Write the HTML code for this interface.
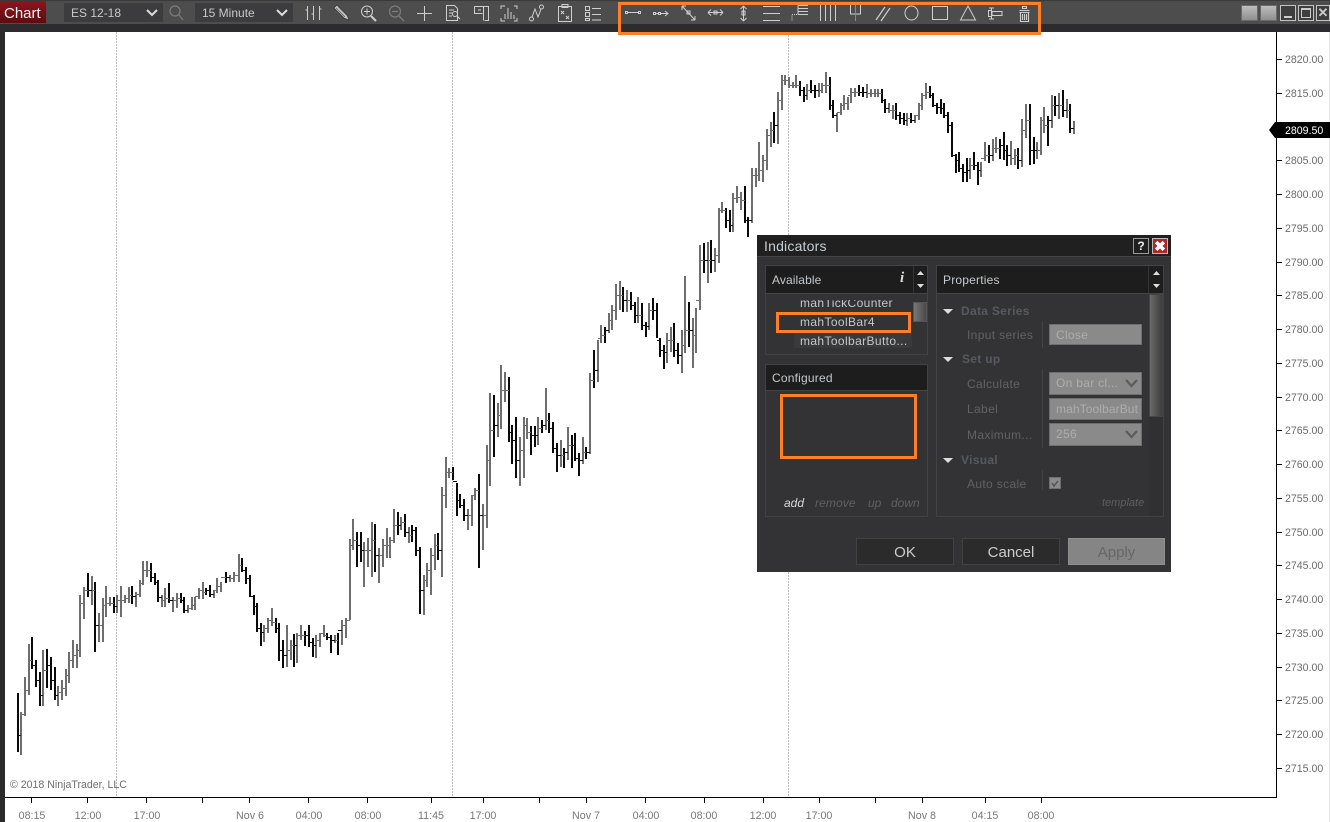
<!DOCTYPE html>
<html><head><meta charset="utf-8"><title>Chart</title>
<style>
html,body{margin:0;padding:0;background:#fff;width:1330px;height:822px;overflow:hidden}
body{position:relative;font-family:"Liberation Sans",Arial,sans-serif}
.a{position:absolute;white-space:nowrap}
.box{position:absolute;box-sizing:border-box}
.lab{position:absolute;white-space:nowrap;font-size:12px;color:#626262;letter-spacing:.35px;line-height:14px}
.sec{position:absolute;white-space:nowrap;font-size:12px;font-weight:bold;color:#565a60;letter-spacing:.3px;line-height:14px}
.inp{position:absolute;box-sizing:border-box;left:1049px;width:93px;background:#8a8a8a;border:1px solid #6e6e6e;color:#adadad;font-size:12px;letter-spacing:.3px;padding-left:6px;overflow:hidden;white-space:nowrap}
.tri{position:absolute;left:943px;width:0;height:0;border-left:5px solid transparent;border-right:5px solid transparent;border-top:5px solid #ddd}
.btn{position:absolute;box-sizing:border-box;top:538px;height:27px;background:#2b2b2b;border:1px solid #424242;color:#ccc;font-size:15px;line-height:27px;text-align:center}
.wb{position:absolute;box-sizing:border-box;top:5px;height:16px}
</style></head>
<body>
<svg class="a" style="left:0;top:0" width="1330" height="822" viewBox="0 0 1330 822">
<rect width="1330" height="822" fill="#fff"/>
<rect x="0" y="0" width="5" height="822" fill="#2b2b2b"/>
<rect x="1329" y="32" width="1" height="790" fill="#e2e2e2"/>
<g stroke="#bdbdbd" stroke-width="1" stroke-dasharray="2 1" shape-rendering="crispEdges">
<path d="M116.5 32V797M452.5 32V797M788.5 32V797"/>
</g>
<g fill="none" stroke-width="2" shape-rendering="crispEdges">
<path stroke="#6e6e6e" d="M21 712V755M25 677V716M29 644V695M43 650V706M58 686V706M62 680V700M66 669V696M69 652V683M73 640V668M77 644V668M80 595V657M84 587V619M92 576V605M99 613V642M103 598V642M106 586V617M110 597V606M117 595V613M121 586V617M125 595V603M129 587V603M136 592V607M140 580V597M143 561V585M147 561V577M162 595V607M165 588V607M173 597V612M177 593V608M188 605V613M192 597V610M195 597V610M199 588V599M203 582V599M214 590V598M217 578V593M221 582V592M230 575V582M234 572V582M239 554V582M264 625V642M268 618V633M272 608V626M287 625V667M291 640V660M297 633V663M301 625V640M316 635V658M320 633V647M324 625V637M335 635V643M342 620V645M346 618V638M350 539V620M353 519V550M364 542V587M368 538V567M372 522V577M379 548V583M383 539V567M387 528V558M390 537V558M394 509V543M401 517V530M409 527V543M424 575V615M427 563V587M431 548V595M435 534V570M442 487V577M446 457V508M449 468V478M468 509V530M472 495V526M475 488V500M483 504V550M487 445V528M490 393V486M498 403V437M501 365V429M505 372V402M520 437V486M524 417V478M527 418V439M538 417V445M546 388V430M561 440V467M568 427V460M583 437V464M590 373V454M598 340V382M601 325V343M609 313V333M612 305V330M616 284V320M620 281V310M627 290V312M638 297V323M649 303V330M667 333V363M671 327V352M682 330V373M685 276V353M693 318V368M696 308V353M700 245V310M708 242V283M715 248V272M719 208V263M722 202V213M733 193V232M737 186V203M741 192V210M752 168V223M756 168V187M759 142V181M763 155V182M767 129V170M771 122V147M778 92V144M782 75V110M785 75V85M789 77V88M793 82V88M796 75V88M807 84V100M819 83V97M822 83V93M826 72V93M837 113V132M841 103V115M844 95V110M848 97V110M851 88V103M855 88V97M867 84V98M871 89V97M875 89V97M878 89V97M889 103V113M893 105V119M907 113V126M915 115V123M919 103V120M922 93V110M926 83V99M970 158V179M981 162V177M985 142V161M993 139V161M996 137V153M1011 141V165M1015 149V165M1022 119V167M1026 104V138M1037 142V159M1041 117V155M1044 107V133M1052 95V128M1059 93V119M1067 99V118M1074 121V134"/>
<path stroke="#0a0a0a" d="M18 693V752M32 637V669M36 660V687M40 672V706M47 649V688M51 657V690M55 667V700M88 573V597M95 582V652M114 597V613M132 586V604M151 563V582M155 573V585M158 580V602M169 583V603M181 593V603M184 597V613M206 588V595M210 585V597M226 572V583M242 558V572M246 567V584M250 575V597M254 595V615M257 603V632M261 623V646M276 618V633M279 623V661M283 640V668M294 634V667M305 631V646M309 625V647M313 638V657M327 633V640M331 635V653M338 633V655M357 532V567M361 532V562M375 524V572M398 512V535M405 514V537M412 525V542M416 527V556M420 547V614M438 533V560M453 467V480M457 483V516M460 494V508M464 499V521M479 474V568M494 395V457M509 377V442M512 425V464M516 417V478M531 426V455M535 426V447M542 420V433M549 413V433M553 422V453M557 443V472M564 448V468M572 435V468M575 433V461M579 453V476M586 447V459M594 350V388M605 327V343M623 287V312M631 292V310M635 302V323M642 303V330M646 322V337M653 298V320M657 303V338M660 338V357M664 345V369M674 323V357M678 343V364M689 302V347M704 243V273M711 240V273M726 208V228M730 210V232M745 186V223M748 217V237M774 112V143M800 81V96M804 87V102M811 80V93M815 85V98M830 77V110M833 100V118M859 85V96M863 87V97M882 89V103M885 99V113M896 103V120M900 112V124M904 113V125M911 113V123M930 86V98M933 93V107M937 103V114M941 99V114M944 103V118M948 112V133M952 122V157M956 154V173M959 152V172M963 164V182M967 158V182M974 152V170M978 162V185M989 145V163M1000 139V159M1004 132V160M1007 145V166M1018 148V169M1030 104V165M1034 137V164M1048 116V146M1055 96V116M1063 90V117M1070 104V133"/>
</g>
<g fill="none" stroke-width="1" shape-rendering="crispEdges" transform="translate(0 .5)">
<path stroke="#6e6e6e" d="M21 714h4M25 690h4M29 660h3M43 670h4M58 692h4M62 688h4M66 675h3M69 660h4M73 655h4M77 650h3M80 603h4M84 590h4M92 590h3M99 625h4M103 605h3M106 603h4M110 603h4M117 600h4M121 600h4M125 598h4M129 595h3M136 594h4M140 583h3M143 570h4M147 570h4M162 600h3M165 598h4M173 600h4M177 598h4M188 608h4M192 605h3M195 596h4M199 590h4M203 592h3M214 590h3M217 586h4M221 577h5M230 578h4M234 575h5M239 565h3M264 628h4M268 620h4M272 622h4M287 650h4M291 645h3M297 635h4M301 635h4M316 640h4M320 633h4M324 635h3M335 640h3M342 625h4M346 620h4M350 545h3M353 540h4M364 550h4M368 550h4M372 540h3M379 555h4M383 545h4M387 545h3M390 540h4M394 525h4M401 522h4M409 535h3M424 580h3M427 570h4M431 555h4M435 545h3M442 495h4M446 472h3M449 472h4M468 515h4M472 495h3M475 490h4M483 515h4M487 460h3M490 430h4M498 415h3M501 390h4M505 390h4M520 450h4M524 425h3M527 432h4M538 428h4M546 420h3M561 455h3M568 445h4M583 452h3M590 380h4M598 338h3M601 335h4M609 320h3M612 310h4M616 295h4M620 295h3M627 300h4M638 315h4M649 310h4M667 340h4M671 340h3M682 345h3M685 330h4M693 335h3M696 300h4M700 260h4M708 260h3M715 255h4M719 210h3M722 210h4M733 198h4M737 197h4M741 200h4M752 175h4M756 175h3M759 170h4M763 160h4M767 135h4M771 130h3M778 100h4M782 80h3M785 80h4M789 85h4M793 85h3M796 85h4M807 90h4M819 90h3M822 85h4M826 85h4M837 112h4M841 105h3M844 103h4M848 95h3M851 92h4M855 92h4M867 93h4M871 93h4M875 93h3M878 93h4M889 110h4M893 110h3M907 118h4M915 115h4M919 105h3M922 95h4M926 92h4M970 165h4M981 158h4M985 155h4M993 148h3M996 148h4M1011 158h4M1015 155h3M1022 130h4M1026 120h4M1037 150h4M1041 120h3M1044 125h4M1052 105h3M1059 105h4M1067 110h3"/>
<path stroke="#0a0a0a" d="M18 735h3M32 665h4M36 680h4M40 695h3M47 665h4M51 680h4M55 695h3M88 590h4M95 625h4M114 606h3M132 596h4M151 577h4M155 582h3M158 597h4M169 600h4M181 600h3M184 610h4M206 590h4M210 594h4M226 577h4M242 570h4M246 578h4M250 596h4M254 606h3M257 628h4M261 632h3M276 628h3M279 650h4M283 655h4M294 645h3M305 635h4M309 642h4M313 645h3M327 637h4M331 640h4M338 630h4M357 545h4M361 550h3M375 555h4M398 525h3M405 532h4M412 530h4M416 550h4M420 590h4M438 550h4M453 481h4M457 500h3M460 505h4M464 515h4M479 515h4M494 425h4M509 432h3M512 440h4M516 460h4M531 435h4M535 435h3M542 425h4M549 428h4M553 448h4M557 455h4M564 452h4M572 445h3M575 458h4M579 460h4M586 452h4M594 370h4M605 330h4M623 300h4M631 305h4M635 315h3M642 325h4M646 326h3M653 310h4M657 340h3M660 350h4M664 352h3M674 350h4M678 355h4M689 330h4M704 260h4M711 260h4M726 220h4M730 225h3M745 220h3M748 220h4M774 125h4M800 90h4M804 95h3M811 90h4M815 90h4M830 105h3M833 115h4M859 92h4M863 92h4M882 100h3M885 108h4M896 115h4M900 118h4M904 120h3M911 120h4M930 95h3M933 105h4M937 107h4M941 108h3M944 115h4M948 125h4M952 155h4M956 160h3M959 168h4M963 172h4M967 170h3M974 165h4M978 170h3M989 155h4M1000 145h4M1004 150h3M1007 155h4M1018 160h4M1030 150h4M1034 150h3M1048 120h4M1055 105h4M1063 110h4M1070 128h4"/>
</g>
<path d="M5 797.500H1277M1276.500 32V798" stroke="#000" stroke-width="1.400" fill="none" shape-rendering="crispEdges"/>
<g stroke="#000" stroke-width="1" shape-rendering="crispEdges">
<path d="M1277 59.500h5M1277 93.500h5M1277 160.500h5M1277 194.500h5M1277 228.500h5M1277 262.500h5M1277 295.500h5M1277 329.500h5M1277 363.500h5M1277 397.500h5M1277 430.500h5M1277 464.500h5M1277 498.500h5M1277 532.500h5M1277 565.500h5M1277 599.500h5M1277 633.500h5M1277 667.500h5M1277 700.500h5M1277 734.500h5M1277 768.500h5"/>
<path d="M31.500 798v5M87.500 798v5M146.500 798v5M202.500 798v5M249.500 798v5M308.500 798v5M367.500 798v5M431.500 798v5M483.500 798v5M539.500 798v5M586.500 798v5M645.500 798v5M704.500 798v5M763.500 798v5M819.500 798v5M875.500 798v5M922.500 798v5M985.500 798v5M1041.500 798v5"/>
</g>
<g font-family="Liberation Sans,Arial,sans-serif" font-size="10.600" fill="#6b6b6b">
<text x="1285" y="63">2820.00</text><text x="1285" y="97">2815.00</text><text x="1285" y="164">2805.00</text><text x="1285" y="198">2800.00</text><text x="1285" y="232">2795.00</text><text x="1285" y="266">2790.00</text><text x="1285" y="299">2785.00</text><text x="1285" y="333">2780.00</text><text x="1285" y="367">2775.00</text><text x="1285" y="401">2770.00</text><text x="1285" y="434">2765.00</text><text x="1285" y="468">2760.00</text><text x="1285" y="502">2755.00</text><text x="1285" y="536">2750.00</text><text x="1285" y="569">2745.00</text><text x="1285" y="603">2740.00</text><text x="1285" y="637">2735.00</text><text x="1285" y="671">2730.00</text><text x="1285" y="704">2725.00</text><text x="1285" y="738">2720.00</text><text x="1285" y="772">2715.00</text>
</g>
<path d="M1269 130L1275 122H1330V138H1275Z" fill="#000"/>
<text x="1285" y="134" font-family="Liberation Sans,Arial,sans-serif" font-size="10.600" fill="#fff">2809.50</text>
<g font-family="Liberation Sans,Arial,sans-serif" font-size="10.700" fill="#777" text-anchor="middle">
<text x="32" y="819">08:15</text><text x="88" y="819">12:00</text><text x="147" y="819">17:00</text><text x="250" y="819">Nov 6</text><text x="309" y="819">04:00</text><text x="368" y="819">08:00</text><text x="431" y="819">11:45</text><text x="483" y="819">17:00</text><text x="586" y="819">Nov 7</text><text x="646" y="819">04:00</text><text x="704" y="819">08:00</text><text x="763" y="819">12:00</text><text x="819" y="819">17:00</text><text x="922" y="819">Nov 8</text><text x="985" y="819">04:15</text><text x="1041" y="819">08:00</text>
</g>
<text x="10" y="788" font-family="Liberation Sans,Arial,sans-serif" font-size="10.600" fill="#6e6e6e">© 2018 NinjaTrader, LLC</text>
<!-- toolbar -->
<rect x="0" y="0" width="1330" height="24" fill="#4d4d4d"/>
<rect x="0" y="0" width="1330" height="1" fill="#3a3a3a"/>
<rect x="0" y="24" width="1330" height="8" fill="#2c2c2e"/>
<defs><linearGradient id="r" x1="0" y1="0" x2="0" y2="1"><stop offset="0" stop-color="#8f151c"/><stop offset="1" stop-color="#5d0c10"/></linearGradient></defs>
<rect x="0" y="1" width="46" height="22" fill="url(#r)"/>
<text x="4" y="18" font-family="Liberation Sans,Arial,sans-serif" font-size="15" fill="#f2f2f2">Chart</text>
<rect x="64" y="3" width="99" height="19" fill="#3c3c3f"/>
<text x="71" y="17" font-family="Liberation Sans,Arial,sans-serif" font-size="12" fill="#c8c8c8">ES 12-18</text>
<path d="M147 10l5 5 5-5" fill="none" stroke="#ddd" stroke-width="2"/>
<rect x="195" y="3" width="98" height="19" fill="#3c3c3f"/>
<text x="202" y="17" font-family="Liberation Sans,Arial,sans-serif" font-size="12" fill="#c8c8c8">15 Minute</text>
<path d="M277 10l5 5 5-5" fill="none" stroke="#ddd" stroke-width="2"/>
<g fill="none" stroke="#7c7c7c" stroke-width="1.200"><circle cx="175" cy="11" r="5"/><path d="M179 15l4 5"/><circle cx="395" cy="11.500" r="5.500"/><path d="M392 11.500h6M399 16l5 5" stroke-width="1.300"/></g>
<path d="M334 8l3-3 10 10 2 5-5-2z" fill="#c4c4c4" stroke="#2e2e2e" stroke-width=".6"/>
<path d="M336 8l9 9M338 6.500l9 9" stroke="#555" stroke-width=".7" fill="none"/>
<g fill="none" stroke="#cfcfcf" stroke-width="1">
<path d="M307.500 6V20M313.500 6V20M319.500 6V20M305.500 10h2M311.500 14h2M319.500 9h2"/>
<circle cx="367" cy="11.500" r="5.500"/><path d="M364 11.500h6M367 8.500v6"/><path d="M371 16l5 5" stroke-width="2"/>
<path d="M417 13.500h15M424.500 6v15"/>
<path d="M446.500 5.500h8l3 3v12h-11zM449 10h5M449 13h3M449 16h3"/><circle cx="455" cy="14" r="2.500"/><path d="M457 16l3 3"/>
<path d="M474.500 6.500h14v14h-4M474.500 6.500v7h8M478 10h3M483.500 6.500v14"/>
<path d="M501 9V6h4M514 6h3v3M501 18v3h4M514 21h3v-3M505 19v-5M508 19V8M511 19v-7M514 19v-4"/>
<circle cx="531.500" cy="19" r="2"/><circle cx="541.500" cy="7" r="2"/><path d="M532 17l3-8 3 8 3-8"/>
<path d="M558.500 6.500h13v15h-13zM562 4.500h6v3h-6zM561 11l3 3M564 11l-3 3M566 16l3 3M569 16l-3 3"/>
<path d="M585.500 6.500h4v4h-4zM585.500 12.500h4v4h-4zM585.500 18.500h4v2h-4zM592 8.500h9M592 14.500h9M592 20h9"/>
<!-- drawing tools -->
<path d="M625.500 11.500h2v2h-2zM638.500 11.500h2v2h-2zM628 12.500h10"/>
<path d="M653.500 12.500h2v2h-2zM658.500 12.500h2v2h-2zM661 13.500h7M665 11l3 2.500-3 2.500M656 13.500h2"/>
<path d="M682 6l13 14M682 6v4M682 6h4M695 20v-4M695 20h-4"/><path d="M687 11h3v3h-3z"/>
<path d="M708 12.500h15M708 12.500l3-3M708 12.500l3 3M723 12.500l-3-3M723 12.500l-3 3M714 11h3v3h-3z"/>
<path d="M743.500 6v15M743.500 6l-3 3M743.500 6l3 3M743.500 21l-3-3M743.500 21l3-3M742 11h3v4h-3z"/>
<path d="M763 6.500h17M763 13.500h17M763 20.500h17"/>
<path d="M798 5.500h10M798 8.500h10M798 11.500h10M798 14.500h10M798 5.500v9"/><path d="M797 14.500h-5v7" stroke-dasharray="1 1"/>
<path d="M820.500 5v16M825.500 5v16M830.500 5v16M835.500 5v16"/>
<path d="M850.500 5v9h10V5"/><path d="M855.500 5v16" stroke="#8a8a8a"/>
<path d="M876 20l9-13M881 21l9-13" stroke-width="1.200"/>
<ellipse cx="911.500" cy="13" rx="6.500" ry="7"/>
<rect x="932.500" y="6.500" width="15" height="13"/>
<path d="M968 6l7.500 14h-15z"/>
<path d="M988.500 10.500h3v6h-3zM992 11.500h10v4h-10zM991.500 8v11M989 8h5M989 19h5"/>
<path d="M1019.500 10.500h10M1019.500 12.500h10M1020.500 12.500v9h8v-9M1022.500 14v6M1024.500 14v6M1026.500 14v6M1022.500 8.500h4v-2h-4z" stroke-width="1.100"/>
</g>
<!-- orange highlight -->
<rect x="619.500" y="3.500" width="420" height="30" fill="none" stroke="#ff7f27" stroke-width="3"/>
</svg>

<!-- window buttons -->
<div class="wb" style="left:1241px;width:17px;background:linear-gradient(#bdbdbd,#8f8f8f);border:1px solid #6a6a6a"></div>
<div class="wb" style="left:1260px;width:17px;background:linear-gradient(#bdbdbd,#8f8f8f);border:1px solid #6a6a6a"></div>
<div class="wb" style="left:1280px;width:16px;background:#3e3e3e;border:1px solid #c4c4c4"><div class="box" style="left:3px;top:10px;width:8px;height:2px;background:#ccc"></div></div>
<div class="wb" style="left:1298px;width:16px;background:#3e3e3e;border:1px solid #c4c4c4"><div class="box" style="left:2px;top:2px;width:10px;height:10px;border:1px solid #ccc;border-top-width:2px"></div></div>
<div class="wb" style="left:1316px;width:14px;background:#3e3e3e;border:1px solid #c4c4c4;color:#ccc;font:bold 13px/14px 'Liberation Sans',sans-serif;text-align:center">✕</div>

<!-- dialog -->
<div class="box" style="left:757px;top:235px;width:414px;height:337px;background:#333335"></div>
<div class="box" style="left:757px;top:235px;width:414px;height:22px;background:#202020;border-bottom:1px solid #444"></div>
<div class="a" style="left:764px;top:237px;font-size:14px;line-height:18px;color:#c8ced2;letter-spacing:.2px">Indicators</div>
<div class="box" style="left:1133px;top:238px;width:16px;height:16px;background:#1f1f1f;border:1px solid #999;color:#eee;font:bold 12px/14px 'Liberation Sans',sans-serif;text-align:center">?</div>
<div class="box" style="left:1152px;top:238px;width:16px;height:16px;background:#a92a2a;border:1px solid #bbb;color:#fff;font:bold 14px/14px 'Liberation Sans',sans-serif;text-align:center">✖</div>

<!-- available -->
<div class="box" style="left:765px;top:265px;width:163px;height:90px;border:1px solid #424244"></div>
<div class="box" style="left:766px;top:266px;width:147px;height:27px;background:#1d1d1d"></div>
<div class="box" style="left:914px;top:266px;width:13px;height:27px;background:#1d1d1d"></div>
<div class="box" style="left:766px;top:293px;width:161px;height:1px;background:#444"></div>
<div class="a" style="left:772px;top:273px;font-size:12px;line-height:15px;color:#c4c8cc;letter-spacing:.1px">Available</div>
<div class="a" style="left:900px;top:269px;font:italic bold 15px/18px 'Liberation Serif',serif;color:#ddd">i</div>
<svg class="a" style="left:914px;top:268px" width="13" height="24"><path d="M3 7l3.500-4 3.500 4z" fill="#ddd"/><path d="M3 16h7l-3.500 4z" fill="#ddd"/></svg>
<div class="box" style="left:794px;top:333px;width:118px;height:15px;background:#3a3a3c"></div>
<div class="box" style="left:766px;top:300px;width:147px;height:12px;overflow:hidden"><div class="a" style="left:34px;top:-4px;font-size:12px;line-height:14px;color:#c4c8cc;letter-spacing:.38px">mahTickCounter</div></div>
<div class="a" style="left:800px;top:315px;font-size:12px;line-height:14px;color:#c4c8cc;letter-spacing:.38px">mahToolBar4</div>
<div class="a" style="left:800px;top:334px;font-size:12px;line-height:14px;color:#c4c8cc;letter-spacing:.38px">mahToolbarButto...</div>
<div class="box" style="left:913px;top:302px;width:14px;height:20px;background:linear-gradient(90deg,#777,#4a4a4a);border:1px solid #555"></div>
<div class="box" style="left:776px;top:312px;width:135px;height:21px;border:3px solid #ff7f27"></div>

<!-- configured -->
<div class="box" style="left:765px;top:364px;width:163px;height:153px;border:1px solid #424244"></div>
<div class="box" style="left:766px;top:365px;width:161px;height:26px;background:#1d1d1d;border-bottom:1px solid #444"></div>
<div class="a" style="left:772px;top:371px;font-size:12px;line-height:15px;color:#c4c8cc;letter-spacing:.2px">Configured</div>
<div class="box" style="left:780px;top:394px;width:137px;height:65px;border:3px solid #ff7f27"></div>
<div class="a" style="left:784px;top:496px;font:italic 12px/14px 'Liberation Sans',sans-serif;color:#d8d8d8">add</div>
<div class="a" style="left:815px;top:496px;font:italic 12px/14px 'Liberation Sans',sans-serif;color:#606060;letter-spacing:.1px">remove</div>
<div class="a" style="left:868px;top:496px;font:italic 12px/14px 'Liberation Sans',sans-serif;color:#606060">up</div>
<div class="a" style="left:891px;top:496px;font:italic 12px/14px 'Liberation Sans',sans-serif;color:#606060">down</div>

<!-- properties -->
<div class="box" style="left:936px;top:265px;width:228px;height:252px;border:1px solid #424244"></div>
<div class="box" style="left:937px;top:266px;width:211px;height:27px;background:#1d1d1d"></div>
<div class="box" style="left:1149px;top:266px;width:14px;height:27px;background:#1d1d1d"></div>
<div class="box" style="left:937px;top:293px;width:226px;height:1px;background:#444"></div>
<div class="a" style="left:943px;top:273px;font-size:12px;line-height:15px;color:#c4c8cc;letter-spacing:.2px">Properties</div>
<svg class="a" style="left:1150px;top:268px" width="13" height="24"><path d="M3 7l3.500-4 3.500 4z" fill="#ddd"/><path d="M3 16h7l-3.500 4z" fill="#ddd"/></svg>
<div class="box" style="left:1149px;top:294px;width:14px;height:222px;background:#303032"></div>
<div class="box" style="left:1149px;top:294px;width:14px;height:123px;background:linear-gradient(90deg,#6a6a6a,#3e3e3e);border:1px solid #444"></div>
<div class="tri" style="top:309px"></div>
<div class="tri" style="top:357px"></div>
<div class="tri" style="top:458px"></div>
<div class="sec" style="left:961px;top:304px">Data Series</div>
<div class="sec" style="left:962px;top:352px">Set up</div>
<div class="sec" style="left:961px;top:453px">Visual</div>
<div class="lab" style="left:967px;top:328px">Input series</div>
<div class="lab" style="left:967px;top:377px">Calculate</div>
<div class="lab" style="left:967px;top:402px">Label</div>
<div class="lab" style="left:967px;top:428px">Maximum...</div>
<div class="lab" style="left:967px;top:477px">Auto scale</div>
<div class="box" style="left:1042px;top:321px;width:1px;height:27px;background:#444"></div>
<div class="box" style="left:1042px;top:369px;width:1px;height:79px;background:#444"></div>
<div class="box" style="left:1042px;top:470px;width:1px;height:20px;background:#444"></div>
<div class="inp" style="top:324px;height:21px;line-height:21px">Close</div>
<div class="inp" style="top:372px;height:23px;line-height:21px">On bar cl...</div>
<div class="inp" style="top:398px;height:22px;line-height:20px;letter-spacing:.1px">mahToolbarBut</div>
<div class="inp" style="top:423px;height:23px;line-height:21px">256</div>
<svg class="a" style="left:1125px;top:378px" width="14" height="12"><path d="M1 2l5.500 6L12 2" fill="none" stroke="#5c5c5c" stroke-width="2.200"/></svg>
<svg class="a" style="left:1125px;top:429px" width="14" height="12"><path d="M1 2l5.500 6L12 2" fill="none" stroke="#5c5c5c" stroke-width="2.200"/></svg>
<div class="box" style="left:1049px;top:477px;width:12px;height:12px;background:#8a8a8a;border:1px solid #6e6e6e"></div>
<svg class="a" style="left:1049px;top:477px" width="12" height="12"><path d="M3 6l2 3 4-5" fill="none" stroke="#555" stroke-width="1.500"/></svg>
<div class="a" style="left:1102px;top:497px;font:italic 11px/13px 'Liberation Sans',sans-serif;color:#5e5e5e">template</div>

<!-- buttons -->
<div class="btn" style="left:856px;width:98px">OK</div>
<div class="btn" style="left:962px;width:98px">Cancel</div>
<div class="btn" style="left:1068px;width:97px;background:#858585;border-color:#8f8f8f;color:#666">Apply</div>
</body></html>
